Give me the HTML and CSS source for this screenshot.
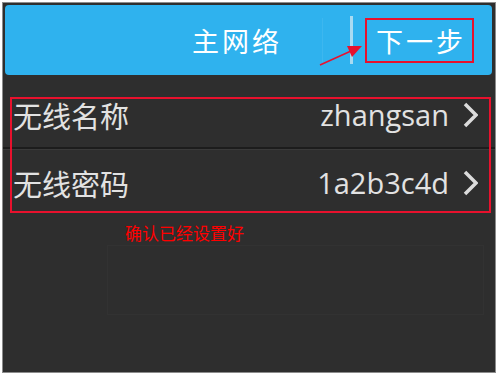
FILE: index.html
```html
<html>
  <head>
    <title>主网络</title>
    <link rel="stylesheet" href="styles.css">
  </head>
  <body>
    <div class="screen">
      <div class="header">
        <span class="title">主网络</span>
        <span class="faint-line"></span>
        <span class="divider"></span>
        <span class="next-box">下一步</span>
        <!-- annotation arrow -->
        <svg class="arrow" width="60" height="30" viewBox="0 0 60 30">
          <line x1="3" y1="27" x2="34" y2="13" stroke="#e8112d" stroke-width="1.5" />
          <polygon points="45,8 30,8 35,19" fill="#e8112d" />
        </svg>
      </div>

      <div class="content">
        <div class="row">
          <span class="label">无线名称</span>
          <span class="value">zhangsan</span>
          <svg class="chevron" width="16" height="26" viewBox="0 0 16 26">
            <polyline points="3,2 14,13 3,24" fill="none" stroke="#dcdcdc" stroke-width="3.5" />
          </svg>
        </div>
        <div class="row-line"></div>
        <div class="row">
          <span class="label">无线密码</span>
          <span class="value">1a2b3c4d</span>
          <svg class="chevron" width="16" height="26" viewBox="0 0 16 26">
            <polyline points="3,2 14,13 3,24" fill="none" stroke="#dcdcdc" stroke-width="3.5" />
          </svg>
        </div>

        <p class="note">确认已经设置好</p>
        <div class="ghost-box"></div>

        <!-- annotation frame round the two rows -->
        <div class="mark"></div>
      </div>
    </div>
  </body>
</html>
```

FILE: styles.css
```css
/* page */
body {
  margin: 0;
  background-color: #ffffff;
  font-family: "Noto Sans", "Noto Sans CJK SC", sans-serif;
}

/* phone panel */
.screen {
  margin: 2px 0 0 2px;
  width: 492px;
  height: 369px;
  border: 1px solid #8c8c8c;
  background-color: #2e2e2e;
}

/* blue top bar */
.header {
  position: relative;
  display: flex;
  align-items: center;
  height: 70px;
  margin: 2px 3px 0 2px;
  padding-left: 187px;
  background-color: #2fb2ee;
  border-radius: 4px;
  color: #ffffff;
}
.title {
  font-size: 27px;
  letter-spacing: 3px;
}
.faint-line {
  width: 1px;
  height: 44px;
  margin-left: 40px;
  background-color: rgba(255, 255, 255, 0.07);
}
.divider {
  width: 3px;
  height: 48px;
  margin-left: 27px;
  background-color: #a8dbf2;
}
.next-box {
  display: flex;
  align-items: center;
  justify-content: center;
  width: 102px;
  height: 41px;
  margin-left: 12px;
  border: 2px solid #e8112d;
  font-size: 27px;
  letter-spacing: 3px;
  padding-left: 3px;
  box-sizing: content-box;
}
.arrow {
  position: absolute;
  left: 312px;
  top: 33px;
}

/* rows */
.content {
  position: relative;
  padding-top: 7px;
}
.row {
  display: flex;
  align-items: center;
  height: 65px;
  padding: 0 17px 0 10px;
  color: #e2e2e2;
}
.label {
  flex: 1;
  font-size: 29px;
}
.value {
  font-family: "Open Sans", "Noto Sans", sans-serif;
  font-size: 29px;
  margin-right: 13px;
}
.row-line {
  height: 2px;
  background-color: #1c1c1c;
  border-bottom: 1px solid #3a3a3a;
}

/* red note */
.note {
  margin: 8px 0 0 122px;
  font-size: 17px;
  line-height: 22px;
  color: #ff0000;
}
.ghost-box {
  width: 375px;
  height: 68px;
  margin: 0 0 0 104px;
  border: 1px solid #323232;
}
.mark {
  position: absolute;
  left: 7px;
  top: 22px;
  width: 477px;
  height: 112px;
  border: 2px solid #e8112d;
}
```
